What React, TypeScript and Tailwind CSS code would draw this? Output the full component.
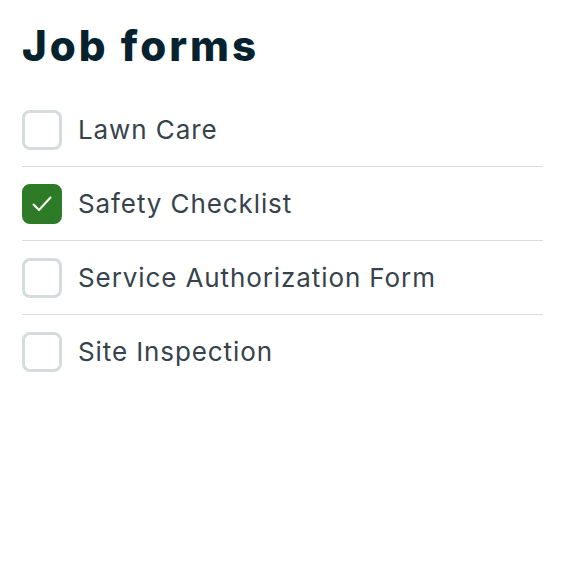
import React, { useState } from "react";

const FORMS = [
  { id: "lawn", label: "Lawn Care", checked: false },
  { id: "safety", label: "Safety Checklist", checked: true },
  { id: "service", label: "Service Authorization Form", checked: false },
  { id: "site", label: "Site Inspection", checked: false },
];

const Checkbox: React.FC<{ checked: boolean; onChange: () => void }> = ({
  checked,
  onChange,
}) => (
  <button
    type="button"
    onClick={onChange}
    className={`flex h-10 w-10 shrink-0 items-center justify-center rounded-lg border-[3px] ${
      checked ? "border-[#2d7a27] bg-[#2d7a27]" : "border-[#d6dcdd] bg-white"
    }`}
  >
    {checked && (
      <svg
        width="24"
        height="24"
        viewBox="0 0 24 24"
        fill="none"
        stroke="white"
        strokeWidth={2}
        strokeLinecap="round"
        strokeLinejoin="round"
      >
        <path d="M3.5 12.5l5.5 5.5L20.5 5.5" />
      </svg>
    )}
  </button>
);

export default function App() {
  const [forms, setForms] = useState(FORMS);

  const toggle = (id: string) =>
    setForms((f) =>
      f.map((item) =>
        item.id === id ? { ...item, checked: !item.checked } : item
      )
    );

  return (
    <div className="min-h-screen bg-white px-[22px] pt-[22px] font-['Inter',sans-serif]">
      <h1 className="text-[42px] font-extrabold leading-[48px] tracking-[3px] text-[#06222f]">
        Job forms
      </h1>
      <ul className="mt-[23px] w-[521px]">
        {forms.map((item, i) => (
          <li
            key={item.id}
            className={`flex h-[74px] items-center gap-4 ${
              i < forms.length - 1 ? "border-b border-[#d8dcde]" : ""
            }`}
          >
            <Checkbox checked={item.checked} onChange={() => toggle(item.id)} />
            <span className="text-[26px] leading-[32px] tracking-[0.9px] text-[#36434c]">
              {item.label}
            </span>
          </li>
        ))}
      </ul>
    </div>
  );
}
